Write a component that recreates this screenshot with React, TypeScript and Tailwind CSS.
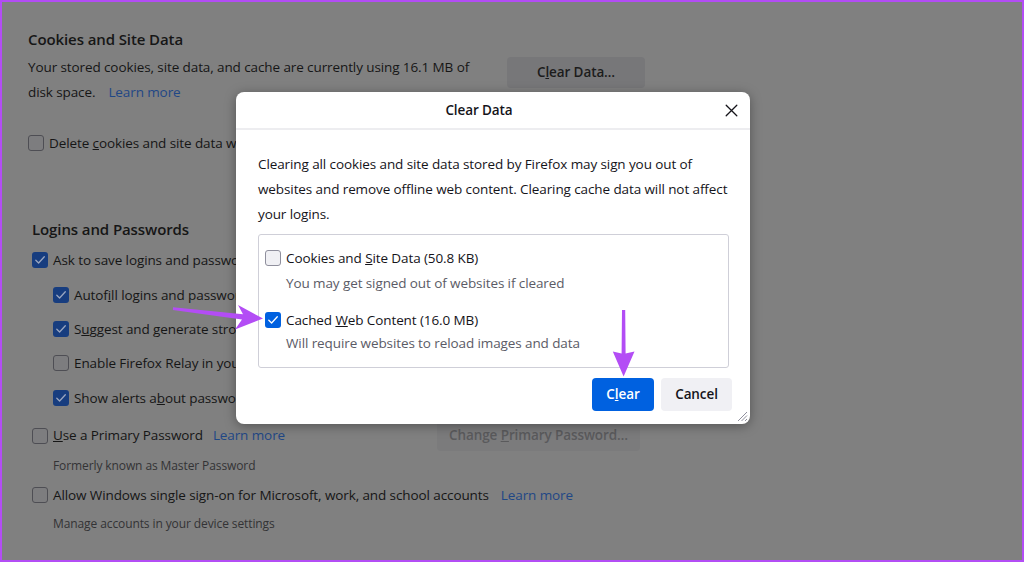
import React from "react";

const font = "font-['Open_Sans','Liberation_Sans',sans-serif]";

type BoxProps = { checked?: boolean; dim?: boolean };

const CheckBox: React.FC<BoxProps> = ({ checked, dim }) => {
  if (checked) {
    return (
      <div
        className={`w-[16px] h-[16px] rounded-[3px] flex items-center justify-center shrink-0 ${
          dim ? "bg-[#173d7f]" : "bg-[#0061e0]"
        }`}
      >
        <svg width="12" height="12" viewBox="0 0 12 12" fill="none">
          <path
            d="M1.8 6.2 L4.6 9 L10.3 2.8"
            stroke={dim ? "#9aa6c0" : "#ffffff"}
            strokeWidth="1.3"
            strokeLinecap="round"
            strokeLinejoin="round"
          />
        </svg>
      </div>
    );
  }
  return (
    <div
      className={`w-[16px] h-[16px] rounded-[3px] border shrink-0 ${
        dim ? "border-[#4e4e54] bg-[#7d7d7f]" : "border-[#8f8f9d] bg-[#f0f0f4]"
      }`}
    />
  );
};

const Link: React.FC<{ className?: string }> = ({ className }) => (
  <span className={`text-[#1f4786] ${className ?? ""}`}>Learn more</span>
);

const Row: React.FC<{ checked?: boolean; className?: string; children: React.ReactNode }> = ({
  checked,
  className,
  children,
}) => (
  <div className={`flex items-center h-[20px] ${className ?? ""}`}>
    <CheckBox checked={checked} dim />
    <div className="ml-[5px] whitespace-nowrap">{children}</div>
  </div>
);

const Background: React.FC = () => (
  <div className="pl-[28px] pt-[29px] text-[#161616]">
    <h2 className="text-[15px] leading-[20px] font-semibold">Cookies and Site Data</h2>
    <div className="flex w-[617px] justify-between mt-[6px]">
      <p className="leading-[25px] whitespace-nowrap">
        Your stored cookies, site data, and cache are currently using 16.1 MB of
        <br />
        disk space.<Link className="ml-[13px]" />
      </p>
      <div className="mt-[2px] w-[138px] h-[31px] rounded-[4px] bg-[#777779] flex items-center justify-center font-semibold text-[#1c1c1c]">
        <span>
          C<u>l</u>ear Data…
        </span>
      </div>
    </div>
    <Row className="mt-[28px]">
      Delete <u>c</u>ookies and site data when Firefox is closed
    </Row>

    <div className="ml-[4px]">
      <h2 className="mt-[66px] text-[15px] leading-[20px] font-semibold">Logins and Passwords</h2>
      <Row checked className="mt-[11px]">
        Ask to save logins and passwords for websites
      </Row>
      <div className="ml-[21px]">
        <Row checked className="mt-[15px]">
          Autof<u>i</u>ll logins and passwords
        </Row>
        <Row checked className="mt-[14px]">
          S<u>u</u>ggest and generate strong passwords
        </Row>
        <Row className="mt-[14px]">Enable Firefox Relay in your password manager</Row>
        <Row checked className="mt-[15px]">
          Show alerts a<u>b</u>out passwords for breached websites
        </Row>
      </div>
      <div className="flex items-center justify-between w-[608px] mt-[12px]">
        <Row>
          <u>U</u>se a Primary Password<Link className="ml-[10px]" />
        </Row>
        <div className="w-[203px] h-[31px] rounded-[4px] bg-[#7b7b7c] flex items-center justify-center font-semibold text-[#5a5a5c]">
          <span>
            Change <u>P</u>rimary Password…
          </span>
        </div>
      </div>
      <div className="ml-[21px] mt-[5px] h-[20px] leading-[20px] text-[12px] text-[#333335]">
        Formerly known as Master Password
      </div>
      <Row className="mt-[9px]">
        Allow Windows single sign-on for Microsoft, work, and school accounts
        <Link className="ml-[12px]" />
      </Row>
      <div className="ml-[21px] mt-[9px] h-[20px] leading-[20px] text-[12px] text-[#333335]">
        Manage accounts in your device settings
      </div>
    </div>
  </div>
);

const Dialog: React.FC = () => (
  <div className="absolute left-[236px] top-[92px] w-[514px] h-[332px] bg-white rounded-[8px] shadow-[0_2px_12px_rgba(0,0,0,0.35)] text-[#15141a]">
    <div className="h-[38px] flex items-center border-b-2 border-[#ededf0]">
      <div className="flex-1 text-center font-semibold">Clear Data</div>
      <div className="w-[18px] h-[18px] mr-[10px] flex items-center justify-center">
        <svg width="13" height="13" viewBox="0 0 13 13" fill="none">
          <path d="M1.2 1.2 L11.8 11.8 M11.8 1.2 L1.2 11.8" stroke="#15141a" strokeWidth="1.3" strokeLinecap="round" />
        </svg>
      </div>
    </div>
    <div className="pl-[22px] pt-[22px]">
      <p className="leading-[25px] whitespace-nowrap">
        Clearing all cookies and site data stored by Firefox may sign you out of
        <br />
        websites and remove offline web content. Clearing cache data will not affect
        <br />
        your logins.
      </p>
      <div className="mt-[7px] w-[471px] h-[134px] border border-[#cfcfd8] rounded-[3px] pl-[6px] pt-[13px]">
        <div className="flex items-center h-[20px]">
          <CheckBox />
          <span className="ml-[5px]">
            Cookies and <u>S</u>ite Data (50.8 KB)
          </span>
        </div>
        <div className="ml-[21px] mt-[5px] leading-[20px] text-[#5b5b66]">
          You may get signed out of websites if cleared
        </div>
        <div className="flex items-center h-[20px] mt-[17px]">
          <CheckBox checked />
          <span className="ml-[5px]">
            Cached <u>W</u>eb Content (16.0 MB)
          </span>
        </div>
        <div className="ml-[21px] mt-[3px] leading-[20px] text-[#5b5b66]">
          Will require websites to reload images and data
        </div>
      </div>
      <div className="flex justify-end w-[474px] mt-[10px] gap-[7px] font-semibold">
        <div className="w-[62px] h-[33px] rounded-[4px] bg-[#0061e0] text-white flex items-center justify-center">
          <span>
            C<u>l</u>ear
          </span>
        </div>
        <div className="w-[71px] h-[33px] rounded-[4px] bg-[#f0f0f4] flex items-center justify-center">
          Cancel
        </div>
      </div>
    </div>
    <svg className="absolute right-[2px] bottom-[2px]" width="12" height="12" viewBox="0 0 12 12">
      <path d="M11 2 L2 11 M11 5.5 L5.5 11 M11 9 L9 11" stroke="#8f8f9d" strokeWidth="1" />
    </svg>
  </div>
);

const Arrows: React.FC = () => (
  <svg className="absolute left-0 top-0 pointer-events-none" width="1024" height="562" viewBox="0 0 1024 562">
    <path
      d="M173 307.2 L243 314.2 L238 305 L263 318.5 L235 329.5 L242 319.5 L173 310 Z"
      fill="#b34df5"
    />
    <path d="M622 310 L625.2 310 L625.6 353.5 L634.5 351.5 L623.6 376.5 L612.8 351.5 L621.6 353.5 Z" fill="#b34df5" />
  </svg>
);

export default function App() {
  return (
    <div
      className={`relative w-[1024px] h-[562px] overflow-hidden bg-[#808080] text-[13.5px] tracking-[-0.1px] ${font}`}
    >
      <Background />
      <Dialog />
      <Arrows />
      <div className="absolute inset-0 border-2 border-[#b34df5] pointer-events-none" />
    </div>
  );
}
